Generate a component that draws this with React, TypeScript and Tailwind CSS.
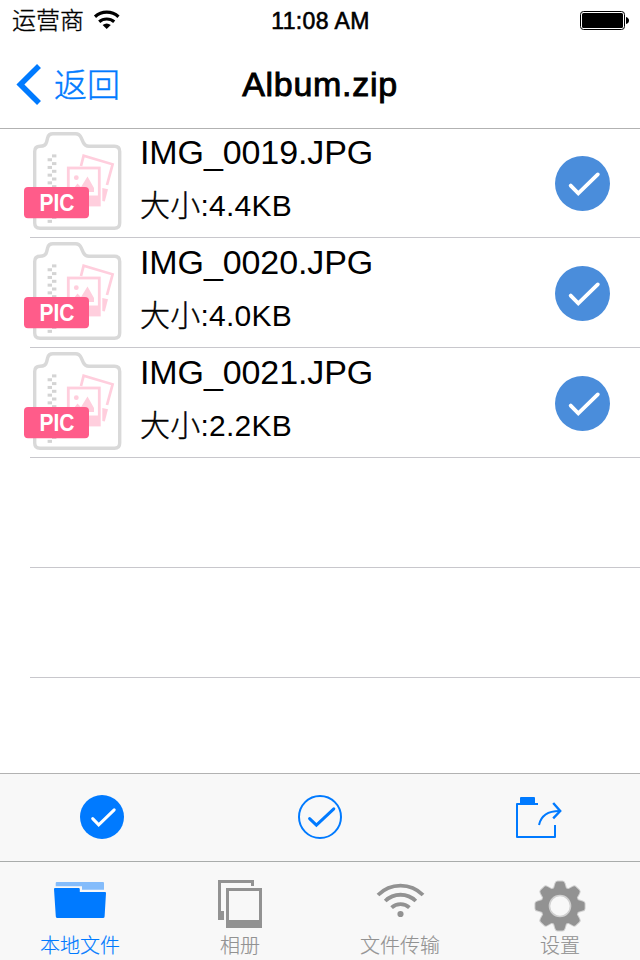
import { useState } from 'react';

interface ArchiveFile {
  id: number;
  name: string;
  size: string;
}

const files: ArchiveFile[] = [
  { id: 1, name: 'IMG_0019.JPG', size: '4.4KB' },
  { id: 2, name: 'IMG_0020.JPG', size: '4.0KB' },
  { id: 3, name: 'IMG_0021.JPG', size: '2.2KB' },
];

const gearAngles = [0, 45, 90, 135, 180, 225, 270, 315];
const zipperTeeth = [0, 1, 2, 3, 4, 5, 6, 7, 8, 9, 10, 11, 12, 13, 14, 15, 16, 17];

function StatusBar() {
  return (
    <div className="flex h-10 items-center justify-between pl-3 pr-[11px]">
      <div className="flex w-[200px] items-center">
        <span className="pt-0.5 text-[24px] leading-[38px] font-light [-webkit-text-stroke:0.35px_#000]">运营商</span>
        <svg className="ml-[9px]" width="28" height="20" viewBox="93 10.5 28 20" fill="none">
          <path d="M95 17.2 A17.5 17.5 0 0 1 118.5 17.2" stroke="#000" strokeWidth="3.2" />
          <path d="M99.2 22.3 A11.5 11.5 0 0 1 114.2 22.3" stroke="#000" strokeWidth="3.2" />
          <path d="M102.6 25.6 Q106.7 22.2 110.8 25.6 L106.7 29.4Z" fill="#000" />
        </svg>
      </div>
      <span className="pt-0.5 text-[23px] tracking-[0.4px] [-webkit-text-stroke:0.6px_#000]">11:08 AM</span>
      <div className="flex w-[200px] justify-end">
        <svg width="49" height="19" viewBox="0 0 49 19">
          <rect x="0.5" y="0.5" width="44" height="18" rx="3" fill="#fff" stroke="#000" />
          <rect x="2" y="2" width="41" height="15" rx="1.5" fill="#000" />
          <path d="M46 6 Q49 7 49 9.5 Q49 12 46 13Z" fill="#000" />
        </svg>
      </div>
    </div>
  );
}

function NavBar() {
  return (
    <div className="flex h-[88px] items-center pl-4">
      <button className="flex w-[184px] items-center text-[#007aff]">
        <svg width="26" height="42" viewBox="16 63.5 26 42" fill="none">
          <path d="M39 66.4 L20.4 84.9 L39 103.4" stroke="currentColor" strokeWidth="5.6" />
        </svg>
        <span className="ml-3 pt-1 text-[33px] leading-[40px] font-light [-webkit-text-stroke:0.4px_#007aff]">返回</span>
      </button>
      <h1 className="w-[240px] text-center text-[34px] tracking-[0.7px] [-webkit-text-stroke:0.9px_#000]">Album.zip</h1>
    </div>
  );
}

function PicZipIcon() {
  return (
    <svg className="shrink-0" width="102" height="104" viewBox="22 130 102 104" fill="none">
      <path
        d="M40 146.3 Q45.5 146.3 46.6 142 L47.6 138 Q48.6 133.8 53 133.8 H75.5 Q79.5 133.8 81.3 138 L83.3 142.5 Q85 146.3 89 146.3 H114.5 Q119.7 146.3 119.7 151.5 V223 Q119.7 228.3 114.5 228.3 H40 Q34.7 228.3 34.7 223 V151.5 Q34.7 146.3 40 146.3Z"
        stroke="#d9d9d9"
        strokeWidth="3.4"
        fill="#fff"
      />
      {zipperTeeth.map(i => (
        <rect key={i} x={i % 2 === 0 ? 52 : 47.6} y={154.4 + i * 3.85} width="4.4" height="3" fill="#d4d4d4" />
      ))}
      <path d="M81 166 L83.6 155.8 L112.6 164.3 L107 185" stroke="#ffcedd" strokeWidth="2.7" />
      <path d="M102.3 188 L108 189.3 L104.8 201.5 L102.3 201Z" fill="#ffcedd" />
      <rect x="68.3" y="168" width="31" height="37" stroke="#ffcedd" strokeWidth="2.8" />
      <path d="M68 195.5 H99 V205 H68Z" fill="#ffcedd" />
      <circle cx="76.3" cy="177.7" r="2.4" fill="#ffcedd" />
      <path d="M73.5 192 V188.5 L77.5 183.5 L81 187 L87.5 176.5 L94 188 V192Z" fill="#ffcedd" />
      <rect x="24" y="187" width="65" height="31.3" rx="4" fill="#ff5c8a" />
      <text
        x="39.5"
        y="210.8"
        textLength="35"
        lengthAdjust="spacingAndGlyphs"
        className="text-[23px] font-bold"
        fill="#fff"
      >
        PIC
      </text>
    </svg>
  );
}

function RowCheck() {
  return (
    <svg className="shrink-0" width="55" height="55" viewBox="0 0 55 55" fill="none">
      <circle cx="27.5" cy="27.5" r="27.5" fill="#4a8ddb" />
      <path d="M15.7 29.6 L23.3 37.4 L42.8 18.4" stroke="#fff" strokeWidth="3.8" strokeLinecap="round" />
    </svg>
  );
}

function FileRow({ file, selected, onToggle }: { file: ArchiveFile; selected: boolean; onToggle: () => void }) {
  return (
    <li className="flex h-[110px] cursor-pointer pl-[22px]" onClick={onToggle}>
      <div className="-mr-[94px] pt-0.5">
        <PicZipIcon />
      </div>
      <div className="flex flex-1 border-b border-[#c8c7cc] pr-[30px] pl-[110px]">
        <div className="flex-1 pt-1">
          <div className="text-[34px] leading-[40px] tracking-[-0.1px]">{file.name}</div>
          <div className="mt-3 text-[30px] leading-[44px] tracking-[0.25px]">
            <span className="font-light [-webkit-text-stroke:0.4px_#000]">大小</span>:{file.size}
          </div>
        </div>
        <div className="pt-7">{selected && <RowCheck />}</div>
      </div>
    </li>
  );
}

function Toolbar({ onSelectAll, onClear }: { onSelectAll: () => void; onClear: () => void }) {
  return (
    <div className="flex h-[88px] items-center justify-between border-t border-[#b2b2b2] bg-[#f8f8f8] px-20 pb-[2px] text-[#007aff]">
      <button onClick={onSelectAll}>
        <svg width="44" height="44" viewBox="0 0 44 44" fill="none">
          <circle cx="22" cy="22" r="22" fill="currentColor" />
          <path d="M12.7 23.6 L18.7 29.8 L34.2 14.8" stroke="#fff" strokeWidth="3" strokeLinecap="round" />
        </svg>
      </button>
      <button onClick={onClear}>
        <svg width="44" height="44" viewBox="0 0 44 44" fill="none">
          <circle cx="22" cy="22" r="21" stroke="currentColor" strokeWidth="2" />
          <path d="M11.6 23.6 L18.4 30.2 L35.8 13.8" stroke="currentColor" strokeWidth="3" strokeLinecap="round" />
        </svg>
      </button>
      <button>
        <svg className="overflow-visible" width="44" height="44" viewBox="0 -1 44 44" fill="none" stroke="currentColor" strokeWidth="2">
          <path d="M4 1.6 Q4 1 5 1 H18 Q19 1 19 2 V8 H4Z" fill="currentColor" stroke="none" />
          <path d="M22 8 H1 V41 H39 V29" strokeLinejoin="round" />
          <path d="M23 29 C25 19.5 31 15 43.5 15" />
          <path d="M37.2 7 L44.2 15 L37.2 22.3" strokeWidth="2.4" />
        </svg>
      </button>
    </div>
  );
}

function FolderIcon() {
  return (
    <svg className="shrink-0" width="56" height="54" viewBox="52 878 56 54">
      <path d="M55.7 883 Q55.7 882 56.7 882 H103 Q104 882 104 883 V889.8 H82 V886.2 H55.7Z" fill="#84bcfb" />
      <path
        d="M54 889 Q54 888 55 888 H78.6 Q79.8 888 79.8 889.2 V892 H105 Q106 892 106 893 L104.6 916.5 Q104.5 918 103 918 H57.4 Q56 918 55.8 916.5Z"
        fill="#007aff"
      />
    </svg>
  );
}

function AlbumIcon() {
  return (
    <svg className="shrink-0" width="56" height="54" viewBox="0 0 56 54" fill="#929292">
      <path d="M6 2 H42 V8 H39 V5 H9 V33 H12 V42 H6Z" />
      <path d="M14 10 H50 V50 H14Z M17 13 V42 H47 V13Z" fillRule="evenodd" />
    </svg>
  );
}

function TransferIcon() {
  return (
    <svg className="shrink-0" width="56" height="54" viewBox="0 0 56 54" fill="none" stroke="#929292" strokeWidth="3.8">
      <path d="M6 17 A31.5 31.5 0 0 1 51 17" />
      <path d="M13.2 23 A21.8 21.8 0 0 1 43.8 23" />
      <path d="M19.6 29.6 A13 13 0 0 1 37.4 29.6" />
      <circle cx="28.5" cy="36" r="3.1" fill="#929292" stroke="none" />
    </svg>
  );
}

function GearIcon() {
  const tooth = 'M21.5 12 L23.4 5.4 Q23.9 3.4 25.6 3.4 H30.4 Q32.1 3.4 32.6 5.4 L34.5 12Z';
  return (
    <svg className="shrink-0" width="56" height="54" viewBox="0 0 56 54" fill="#929292">
      <g stroke="#d0d0d0" strokeWidth="2" strokeLinejoin="round">
        {gearAngles.map(a => <path key={a} d={tooth} transform={`rotate(${a} 28 28)`} />)}
        <circle cx="28" cy="28" r="18.8" />
      </g>
      {gearAngles.map(a => <path key={a} d={tooth} transform={`rotate(${a} 28 28)`} />)}
      <circle cx="28" cy="28" r="18.8" />
      <circle cx="28" cy="28" r="10.5" fill="#f8f8f8" stroke="#d0d0d0" strokeWidth="1.6" />
    </svg>
  );
}

const tabs = [
  { label: '本地文件', icon: FolderIcon },
  { label: '相册', icon: AlbumIcon },
  { label: '文件传输', icon: TransferIcon },
  { label: '设置', icon: GearIcon },
];

function TabBar() {
  return (
    <nav className="flex h-[99px] border-t border-[#a9acab] bg-[#f8f8f8] pt-4">
      {tabs.map((tab, i) => (
        <button key={tab.label} className="flex flex-1 flex-col items-center">
          <tab.icon />
          <span
            className={`text-[20px] leading-[29px] font-light [-webkit-text-stroke:0.15px_currentColor] ${i === 0 ? 'text-[#007aff]' : 'text-[#929292]'}`}
          >
            {tab.label}
          </span>
        </button>
      ))}
    </nav>
  );
}

export default function App() {
  const [selected, setSelected] = useState<number[]>(files.map(f => f.id));

  const toggle = (id: number) => {
    setSelected(selected.includes(id) ? selected.filter(s => s !== id) : [...selected, id]);
  };

  return (
    <div className="flex h-[960px] w-[640px] flex-col overflow-hidden bg-white font-['Liberation_Sans','Noto_Sans_CJK_SC',sans-serif] text-black">
      <header className="border-b border-[#b2b2b2]">
        <StatusBar />
        <NavBar />
      </header>
      <ul className="-mt-px flex-1">
        {files.map(file => (
          <FileRow key={file.id} file={file} selected={selected.includes(file.id)} onToggle={() => toggle(file.id)} />
        ))}
        {/* empty rows keep their separators */}
        <li className="ml-[30px] h-[110px] border-b border-[#c8c7cc]" />
        <li className="ml-[30px] h-[110px] border-b border-[#c8c7cc]" />
      </ul>
      <Toolbar onSelectAll={() => setSelected(files.map(f => f.id))} onClear={() => setSelected([])} />
      <TabBar />
    </div>
  );
}
